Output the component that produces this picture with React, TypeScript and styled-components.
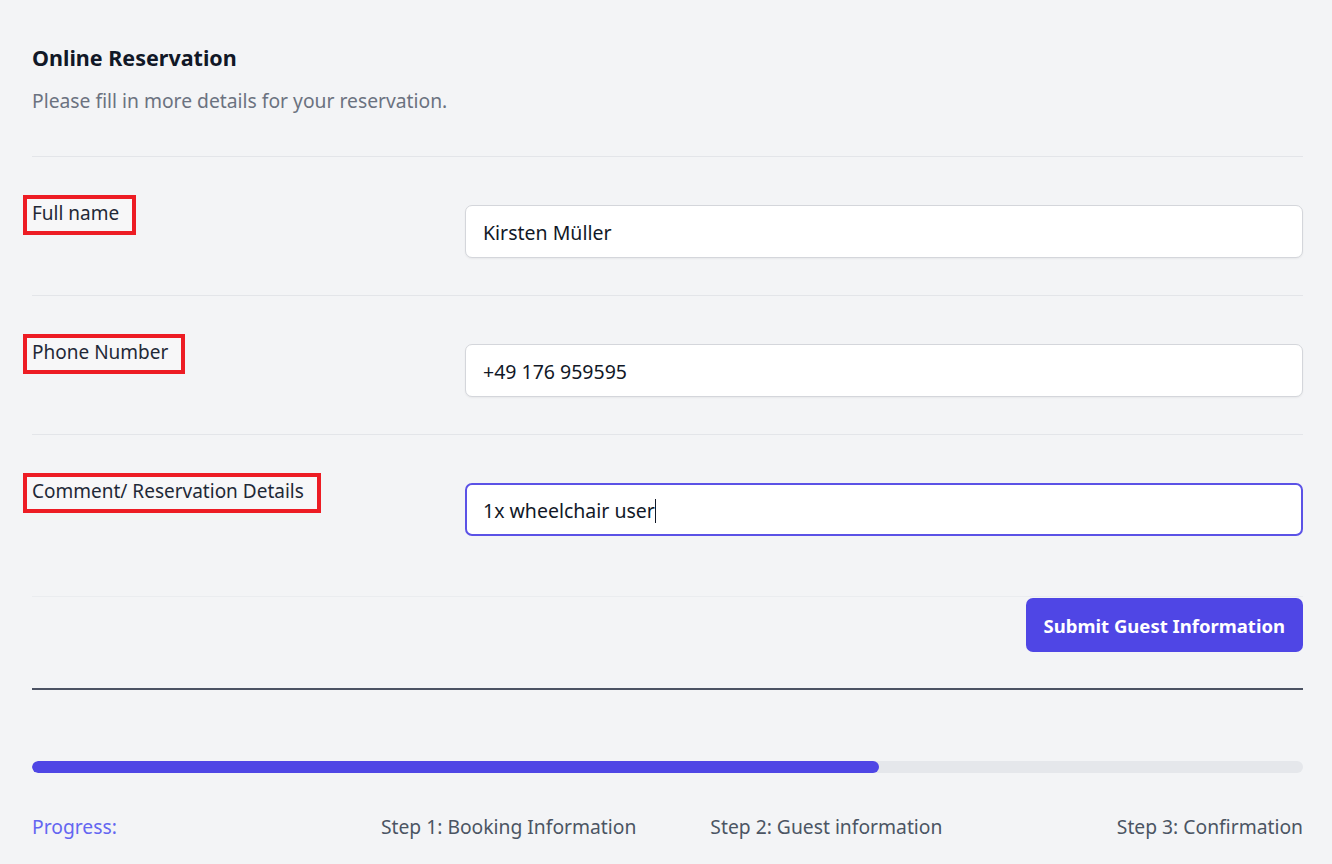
import * as React from 'react';

import styled, { createGlobalStyle, css } from 'styled-components';

const GlobalStyle = createGlobalStyle`
    html, body {
        margin: 0;
        padding: 0;
        background-color: #f3f4f6;
    }

    body {
        font-family: 'Noto Sans', 'Open Sans', sans-serif;
        color: #111827;
    }

    * {
        box-sizing: border-box;
    }
`;

interface IField {
    label: string;
    value: string;
    focused?: boolean;
}

const fields: IField[] = [
    { label: 'Full name', value: 'Kirsten Müller' },
    { label: 'Phone Number', value: '+49 176 959595' },
    { label: 'Comment/ Reservation Details', value: '1x wheelchair user', focused: true },
];

const steps = ['Progress:', 'Step 1: Booking Information', 'Step 2: Guest information', 'Step 3: Confirmation'];

const App = () => {
    return (
        <>
            <GlobalStyle />
            <Page>
                <Header>
                    <Title>Online Reservation</Title>
                    <Subtitle>Please fill in more details for your reservation.</Subtitle>
                </Header>

                {fields.map((field) => (
                    <Row key={field.label}>
                        <LabelCell>
                            <Label>{field.label}</Label>
                        </LabelCell>
                        <Input focused={field.focused}>
                            {field.value}
                            {field.focused && <Caret />}
                        </Input>
                    </Row>
                ))}

                <ActionBar>
                    <SubmitButton type="button">Submit Guest Information</SubmitButton>
                </ActionBar>

                <Rule />

                <Progress>
                    <Track>
                        <Fill style={{ width: `${(2 / 3) * 100}%` }} />
                    </Track>
                    <StepList>
                        {steps.map((step, i) => (
                            <Step key={step} index={i}>
                                {step}
                            </Step>
                        ))}
                    </StepList>
                </Progress>
            </Page>
        </>
    );
};

export default App;

const Page = styled.div`
    padding: 44px 29px 0 32px;
    min-height: 864px;
`;

const Header = styled.div`
    padding-bottom: 42px;
    border-bottom: 1px solid #e3e5e9;
`;

const Title = styled.h1`
    margin: 0;
    font-size: 21.5px;
    font-weight: 700;
    line-height: 28px;
    color: #111827;
`;

const Subtitle = styled.p`
    margin: 16px 0 0;
    font-size: 19.3px;
    line-height: 26px;
    color: #6b7280;
`;

const Row = styled.div`
    display: grid;
    grid-template-columns: 419px 1fr;
    column-gap: 14px;
    align-items: start;

    padding: 38px 0 37px;

    & + & {
        border-top: 1px solid #e3e5e9;
    }
`;

const LabelCell = styled.div`
    margin-left: -9px;
`;

const Label = styled.span`
    display: inline-block;

    padding: 1px 13px 5px 5px;

    font-size: 19px;
    line-height: 26px;
    color: #1f2937;

    background-color: #f7f7f8;
    border: 4px solid #ed1c24;
`;

const Input = styled.div<{ focused?: boolean }>`
    display: flex;
    align-items: center;

    margin-top: 10px;
    padding: 2px 17px 0;
    height: 53px;

    font-size: 19.5px;
    color: #111827;

    background-color: #ffffff;
    border-radius: 7px;

    ${(props) =>
        props.focused
            ? css`
                  border: 2px solid #5b52e6;
                  padding: 2px 16px 0;
              `
            : css`
                  border: 1px solid #d4d6db;
                  box-shadow: 0 1px 2px rgba(0, 0, 0, 0.05);
              `}
`;

const Caret = styled.span`
    display: inline-block;
    width: 1px;
    height: 24px;
    background-color: #111827;
`;

const ActionBar = styled.div`
    display: flex;
    justify-content: flex-end;

    margin-top: 23px;
    padding-top: 1px;

    border-top: 1px solid #eaecef;
`;

const SubmitButton = styled.button`
    height: 54px;
    padding: 0 18px;

    font-family: inherit;
    font-size: 18.5px;
    font-weight: 700;
    color: #ffffff;

    background-color: #4f46e5;
    border: none;
    border-radius: 7px;
`;

const Rule = styled.div`
    margin-top: 36px;
    height: 2px;
    background-color: #4b5263;
`;

const Progress = styled.div`
    padding-top: 71px;
`;

const Track = styled.div`
    height: 12px;
    border-radius: 6px;
    background-color: #e5e7eb;
    overflow: hidden;
`;

const Fill = styled.div`
    height: 100%;
    border-radius: 6px;
    background-color: #4f46e5;
`;

const StepList = styled.div`
    display: grid;
    grid-template-columns: repeat(4, 1fr);

    margin-top: 40px;

    font-size: 19.3px;
    line-height: 28px;
`;

const Step = styled.div<{ index: number }>`
    color: #4b5563;
    text-align: center;

    ${(props) =>
        props.index === 0 &&
        css`
            text-align: left;
            color: #6366f1;
        `}

    ${(props) =>
        props.index === 3 &&
        css`
            text-align: right;
        `}
`;
